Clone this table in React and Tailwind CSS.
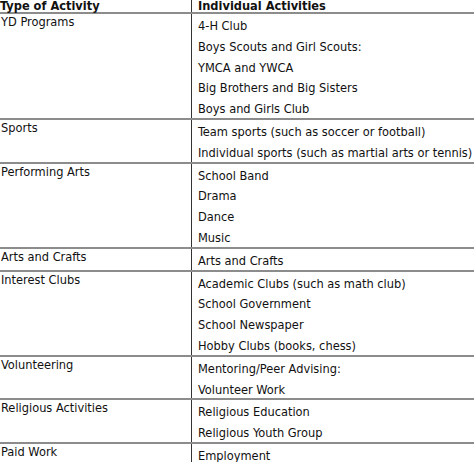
const rows = [
  {
    type: "YD Programs",
    items: [
      "4-H Club",
      "Boys Scouts and Girl Scouts:",
      "YMCA and YWCA",
      "Big Brothers and Big Sisters",
      "Boys and Girls Club",
    ],
  },
  {
    type: "Sports",
    items: [
      "Team sports (such as soccer or football)",
      "Individual sports (such as martial arts or tennis)",
    ],
  },
  {
    type: "Performing Arts",
    items: ["School Band", "Drama", "Dance", "Music"],
  },
  { type: "Arts and Crafts", items: ["Arts and Crafts"] },
  {
    type: "Interest Clubs",
    items: [
      "Academic Clubs (such as math club)",
      "School Government",
      "School Newspaper",
      "Hobby Clubs (books, chess)",
    ],
  },
  {
    type: "Volunteering",
    items: ["Mentoring/Peer Advising:", "Volunteer Work"],
  },
  {
    type: "Religious Activities",
    items: ["Religious Education", "Religious Youth Group"],
  },
  { type: "Paid Work", items: ["Employment"] },
];

const App = () => {
  return (
    <div
      className="w-[474px] h-[462px] overflow-hidden bg-white text-[#111] text-[12.7px] whitespace-nowrap"
      style={{ fontFamily: '"DejaVu Sans Condensed", "DejaVu Sans", sans-serif' }}
    >
      <div className="flex border-b-2 border-[#8c8c8c] font-bold">
        <div className="w-[191px] shrink-0 h-[12px] leading-[12px]">Type of Activity</div>
        <div className="flex-1 border-l border-[#333] pl-[6px] h-[12px] leading-[12px]">
          Individual Activities
        </div>
      </div>
      {rows.map((row) => (
        <div key={row.type} className="flex border-b-2 border-[#8c8c8c]">
          <div className="w-[191px] shrink-0 pl-[1px] leading-[15px]">{row.type}</div>
          <div className="flex-1 border-l border-[#333] pl-[6px]">
            {row.items.map((item) => (
              <div key={item} className="h-[20.8px] pt-[4px] leading-[16.8px]">
                {item}
              </div>
            ))}
          </div>
        </div>
      ))}
    </div>
  );
};

export default App;
